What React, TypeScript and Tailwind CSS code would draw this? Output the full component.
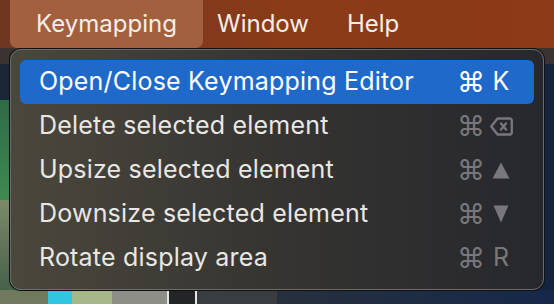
import React from 'react';

type Item = {
    label: string;
    keyGlyph: React.ReactNode;
    active?: boolean;
};

const DeleteKey = () => (
    <svg className="shrink-0 block" width="23" height="19" viewBox="0 0 23 19" fill="none" stroke="currentColor" strokeWidth="2.3" strokeLinejoin="round">
        <path d="M7.5 1.5h12.5a1.8 1.8 0 0 1 1.8 1.8v12.4a1.8 1.8 0 0 1-1.8 1.8H7.5L1.3 9.5z" />
        <path d="M11 6.5l5 6M16 6.5l-5 6" strokeLinecap="round" />
    </svg>
);

const UpTri = () => (
    <svg className="shrink-0 block" width="18" height="17" viewBox="0 0 18 17" fill="currentColor">
        <path d="M9 0.5L17.5 16.5H0.5z" />
    </svg>
);

const DownTri = () => (
    <svg className="shrink-0 block" width="16" height="18" viewBox="0 0 16 18" fill="currentColor">
        <path d="M0.5 0.5H15.5L8 17.5z" />
    </svg>
);

const items: Item[] = [
    { label: 'Open/Close Keymapping Editor', keyGlyph: 'K', active: true },
    { label: 'Delete selected element', keyGlyph: <DeleteKey /> },
    { label: 'Upsize selected element', keyGlyph: <UpTri /> },
    { label: 'Downsize selected element', keyGlyph: <DownTri /> },
    { label: 'Rotate display area', keyGlyph: 'R' },
];

const MenuRow: React.FC<{ item: Item }> = ({ item }) => (
    <div
        className={`flex items-center justify-between h-[44px] pl-[19px] pr-[24px] rounded-[6px] ${
            item.active ? 'bg-[#1e69c9] text-white' : 'text-[#e9e7e4]'
        }`}
    >
        <span className="tracking-[0.2px]">{item.label}</span>
        <span className={`flex items-center gap-[11px] ${item.active ? 'text-white' : 'text-[#78787c]'}`}>
            <span className="w-[20px] flex justify-center text-[28px] leading-none">⌘</span>
            <span className="w-[18px] flex justify-center items-center">{item.keyGlyph}</span>
        </span>
    </div>
);

export default function App() {
    return (
        <div
            className="relative w-[554px] h-[304px] overflow-hidden bg-[#1c2433]"
            style={{ fontFamily: 'Inter, "Noto Sans", sans-serif' }}
        >
            {/* menu bar */}
            <div className="flex items-stretch h-[48px] bg-gradient-to-r from-[#6f3620] via-[#8a3b18] to-[#8c3a17] text-[24px] text-[#f6ede8]">
                <div className="ml-[10px] w-[193px] flex items-center justify-center rounded-b-[7px] bg-[#a3603f]">
                    Keymapping
                </div>
                <div className="ml-[14px] flex items-center">Window</div>
                <div className="ml-[38px] flex items-center">Help</div>
            </div>

            {/* app behind the menu */}
            <div className="h-[16px] bg-[#3b3331]" />
            <div className="flex h-[240px]">
                <div className="w-[40px] flex flex-col">
                    <div className="h-[36px] bg-[#1b2636]" />
                    <div className="h-[100px] bg-gradient-to-b from-[#2f6a46] to-[#3f8a52]" />
                    <div className="flex-1 bg-gradient-to-b from-[#7d8a6a] to-[#3d5a45]" />
                </div>
                <div className="flex-1 bg-gradient-to-r from-[#4b5a4e] via-[#27303c] to-[#14233d]" />
            </div>
            <div className="absolute left-0 top-[290px] w-[554px] h-[14px] flex">
                <div className="w-[48px] bg-[#6f7a5c]" />
                <div className="w-[24px] bg-[#2ec6e0]" />
                <div className="w-[40px] bg-[#a6b88a]" />
                <div className="w-[55px] bg-[#8d8f86]" />
                <div className="w-[30px] bg-[#222426] border-x-2 border-[#e6e6e6]" />
                <div className="w-[80px] bg-[#3a3d40]" />
                <div className="flex-1 bg-gradient-to-r from-[#26303d] to-[#16284a]" />
            </div>

            {/* dropdown */}
            <div className="absolute left-[10px] top-[49px] w-[534px] h-[241px] rounded-[11px] border border-[#6b6b6b] shadow-[0_0_0_1px_#111] bg-gradient-to-r from-[#4a473c] via-[#353431] to-[#27282d] px-[9px] pt-[10px] text-[25px]">
                {items.map(item => (
                    <MenuRow key={item.label} item={item} />
                ))}
            </div>
        </div>
    );
}
